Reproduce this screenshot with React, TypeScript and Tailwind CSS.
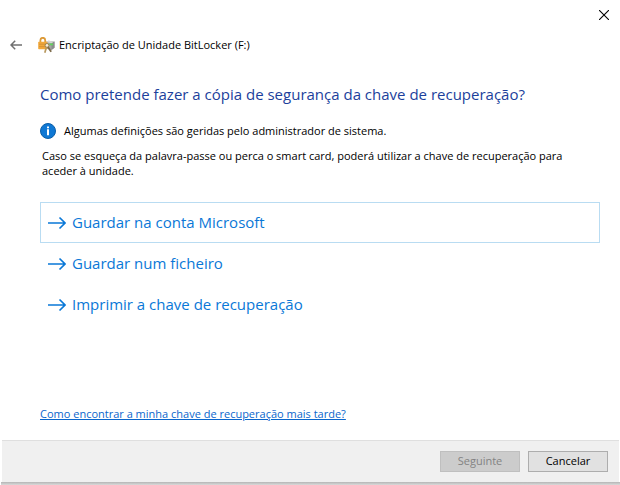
import { useState } from "react";

const options = [
  { id: "account", label: "Guardar na conta Microsoft" },
  { id: "file", label: "Guardar num ficheiro" },
  { id: "print", label: "Imprimir a chave de recuperação" },
];

function LockIcon() {
  return (
    <svg width="17" height="17" viewBox="0 0 17 17" fill="none" className="shrink-0" aria-hidden="true">
      {/* drive */}
      <path d="M7.5 5l3-1.2 6 .6v6.4L13.5 13 8 11.5z" fill="#a4a4a4" />
      <path d="M7.5 5l3-1.2 6 .6-3 1.8z" fill="#d4d4d4" />
      <path d="M13.5 6.5l3-2v6.3l-3 2.2z" fill="#8c8c8c" />
      <path d="M11.5 6.5h3.5v1.8h-3.5z" fill="#5fd45a" />
      {/* padlock */}
      <path d="M2.4 5.5V3.2a2.4 2.4 0 0 1 4.8 0v2.3" stroke="#dc9a38" strokeWidth="1.8" />
      <rect x="0.2" y="4.8" width="9.2" height="7.4" rx="0.7" fill="#f0a83c" />
      <path d="M1 7.2h7M1 9.6h7" stroke="#cf8a30" strokeWidth="0.7" />
      {/* keys */}
      <circle cx="9" cy="8.4" r="1.9" fill="#f8efdc" stroke="#9c824f" strokeWidth="1" />
      <path d="M8.4 10.2L6.8 15.8" stroke="#b8995f" strokeWidth="1.7" />
      <path d="M9.9 10l3.3 4.8" stroke="#7d6b4b" strokeWidth="1.8" />
    </svg>
  );
}

function InfoIcon() {
  return (
    <svg width="16" height="16" viewBox="0 0 16 16" className="shrink-0" aria-hidden="true">
      <circle cx="8" cy="8" r="7.5" fill="#0f78d4" stroke="#0a5ea8" />
      <path d="M7 3.5h2v1.8H7zM7 6.3h2v6H7z" fill="#fff" />
    </svg>
  );
}

function ArrowIcon() {
  return (
    <svg width="18" height="14" viewBox="0 0 18 14" fill="none" className="shrink-0" aria-hidden="true">
      <path d="M0 7h17M11.5 1.5L17 7l-5.5 5.5" stroke="#0a78d7" strokeWidth="1.6" />
    </svg>
  );
}

export default function App() {
  const [selected, setSelected] = useState("account");

  return (
    <div className="flex min-h-screen flex-col bg-white font-['Open_Sans','Noto_Sans',sans-serif] text-[11px] text-black">
      <header>
        <div className="flex h-[30px] justify-end pr-1.5">
          <button aria-label="Fechar" className="flex w-5 items-center justify-center">
            <svg width="10" height="10" viewBox="0 0 10 10" fill="none" aria-hidden="true">
              <path d="M0 0l10 10M10 0L0 10" stroke="#000" strokeWidth="1.1" />
            </svg>
          </button>
        </div>
        <div className="flex h-[30px] items-center pl-2">
          <button aria-label="Voltar" className="flex h-6 w-6 items-center px-0.5">
            <svg width="12" height="10" viewBox="0 0 12 10" fill="none" aria-hidden="true">
              <path d="M12 5H1M5.2 0.7L1 5l4.2 4.3" stroke="#707070" strokeWidth="1.5" />
            </svg>
          </button>
          <div className="flex items-center gap-1 pl-1.5">
            <LockIcon />
            <h1>Encriptação de Unidade BitLocker (F:)</h1>
          </div>
        </div>
      </header>

      <main className="flex grow flex-col items-start px-5 pt-6 pb-4 pl-10">
        <h2 className="text-[15px] leading-5 text-[#1c3f9c]">
          Como pretende fazer a cópia de segurança da chave de recuperação?
        </h2>
        <p className="mt-[19px] flex items-center gap-2 leading-4">
          <InfoIcon />
          Algumas definições são geridas pelo administrador de sistema.
        </p>
        <p className="mt-[9px] pr-8 pl-0.5 leading-[15px]">
          Caso se esqueça da palavra-passe ou perca o smart card, poderá utilizar a chave de recuperação para aceder à
          unidade.
        </p>

        <div className="mt-6 flex w-full flex-col">
          {options.map((option) => (
            <button
              key={option.id}
              onClick={() => setSelected(option.id)}
              className={`flex h-[41px] items-center gap-1.5 border px-[7px] text-left text-[15px] text-[#0a78d7] ${
                selected === option.id ? "border-[#b9dcf2]" : "border-transparent"
              }`}
            >
              <ArrowIcon />
              {option.label}
            </button>
          ))}
        </div>

        <a href="#ajuda" className="mt-auto mb-0.5 leading-4 text-[#0a66cc] underline">
          Como encontrar a minha chave de recuperação mais tarde?
        </a>
      </main>

      <footer className="mr-px ml-0.5 flex h-[42px] items-center justify-end gap-2 border-t border-[#dfdfdf] bg-[#f0f0f0] pr-[11px]">
        <button disabled className="h-[21px] w-20 border border-[#bfbfbf] bg-[#cccccc] text-[#838383]">
          Seguinte
        </button>
        <button className="h-[21px] w-20 border border-[#adadad] bg-[#e1e1e1]">Cancelar</button>
      </footer>
      <div className="ml-px h-[3px] bg-linear-to-b from-[#b5b5b5] to-[#dadada]" />
    </div>
  );
}
